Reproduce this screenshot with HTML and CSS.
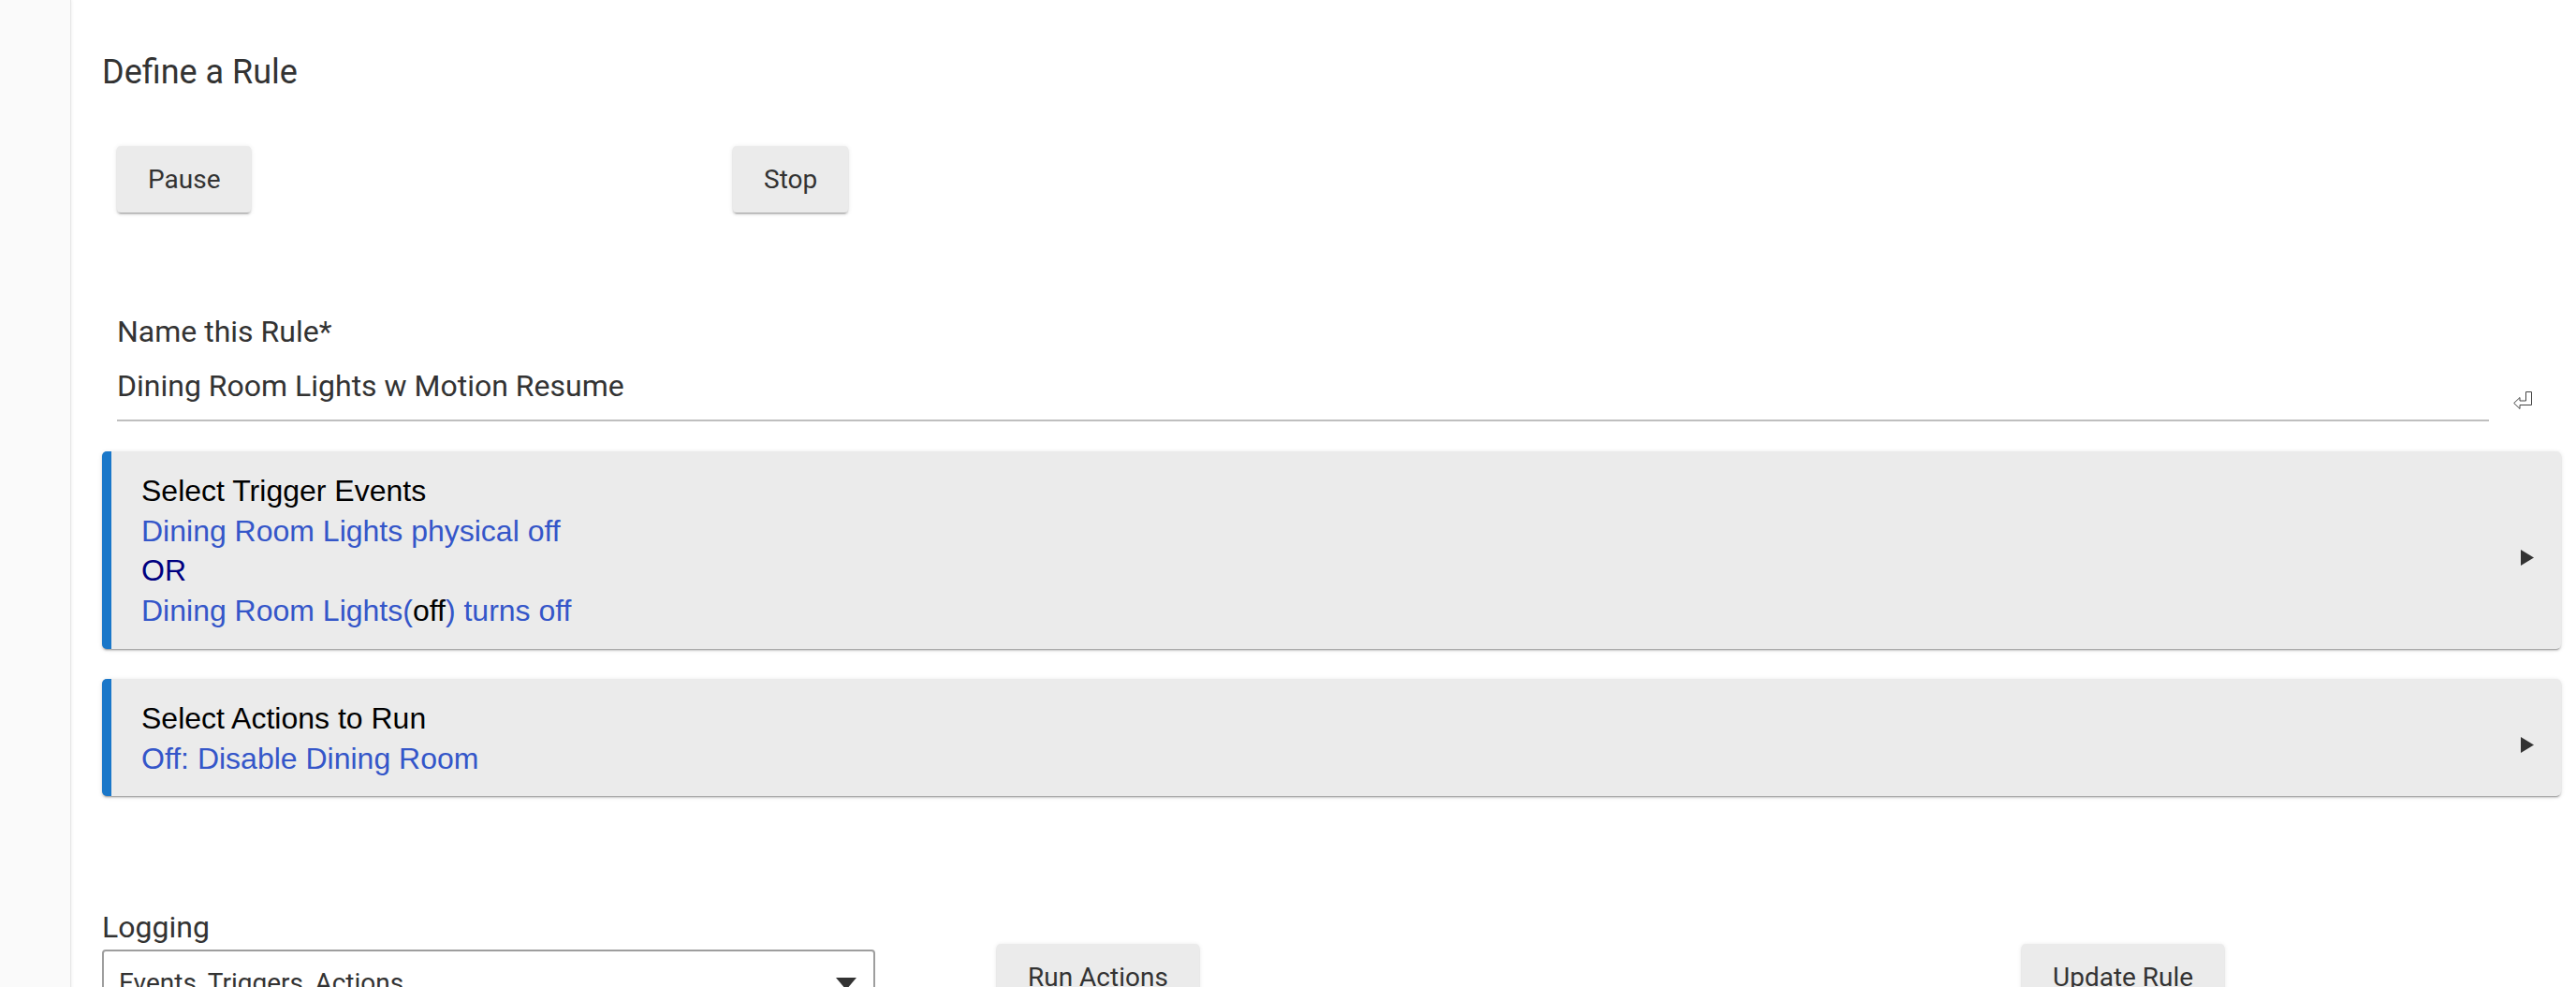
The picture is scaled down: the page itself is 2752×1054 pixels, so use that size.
FILE: index.html
```html
<!DOCTYPE html>
<html lang="en">
<head>
    <meta charset="UTF-8">
    <meta name="viewport" content="width=device-width, initial-scale=1.0">
    <title>Define a Rule</title>
    <link rel="stylesheet" href="styles.css">
</head>
<body>
    <div class="layout">
        <aside class="sidebar"></aside>

        <main class="content">
            <h2 class="page-title">Define a Rule</h2>

            <div class="control-row">
                <button class="btn">Pause</button>
                <button class="btn">Stop</button>
            </div>

            <div class="name-field">
                <label class="field-label">Name this Rule*</label>
                <div class="name-input-row">
                    <div class="name-input">Dining Room Lights w Motion Resume</div>
                    <svg class="enter-icon" width="20" height="20" viewBox="0 0 20 20">
                        <path d="M13.5 0.5 H19.5 V14.5 H7 V18.5 L0.7 12.5 L7 6.5 V10 H13.5 Z" fill="none" stroke="#444" stroke-width="1"/>
                    </svg>
                </div>
            </div>

            <div class="section-card">
                <div class="card-body">
                    <div class="card-title">Select Trigger Events</div>
                    <div class="link">Dining Room Lights physical off</div>
                    <div class="op">OR</div>
                    <div class="link">Dining Room Lights(<span class="state">off</span>) turns off</div>
                </div>
                <svg class="card-arrow" width="14" height="17" viewBox="0 0 14 17"><path d="M0 0 L14 8.5 L0 17 Z" fill="#333"/></svg>
            </div>

            <div class="section-card">
                <div class="card-body">
                    <div class="card-title">Select Actions to Run</div>
                    <div class="link">Off: Disable Dining Room</div>
                </div>
                <svg class="card-arrow" width="14" height="17" viewBox="0 0 14 17"><path d="M0 0 L14 8.5 L0 17 Z" fill="#333"/></svg>
            </div>

            <div class="bottom-row">
                <div class="logging-field">
                    <label class="field-label">Logging</label>
                    <div class="select-box">
                        <span>Events, Triggers, Actions</span>
                        <svg class="select-arrow" width="22" height="13" viewBox="0 0 22 13"><path d="M0 0 H22 L11 13 Z" fill="#333"/></svg>
                    </div>
                </div>
                <div class="bottom-btn">
                    <button class="btn">Run Actions</button>
                </div>
                <div class="bottom-btn">
                    <button class="btn">Update Rule</button>
                </div>
            </div>
        </main>
    </div>
</body>
</html>
```

FILE: styles.css
```css
* {
    margin: 0;
    padding: 0;
    box-sizing: border-box;
}

body {
    font-family: Roboto, "Liberation Sans", sans-serif;
    background: #fff;
    color: #333;
    overflow: hidden;
}

.layout {
    display: flex;
    min-height: 100vh;
}

.sidebar {
    width: 76px;
    flex-shrink: 0;
    background: #fafafa;
    border-right: 1px solid #e6e6e6;
    box-shadow: 1px 0 3px rgba(0, 0, 0, 0.05);
}

.content {
    flex: 1;
    padding: 56px 16px 0 33px;
}

.page-title {
    font-size: 36px;
    font-weight: 400;
    line-height: 42px;
    color: #333;
}

.control-row {
    display: grid;
    grid-template-columns: 658px auto;
    justify-items: start;
    padding-left: 16px;
    margin-top: 58px;
}

.btn {
    height: 71px;
    padding: 0 33px;
    font-family: Roboto, sans-serif;
    font-size: 28px;
    color: #333;
    background: #ebebeb;
    border: none;
    border-radius: 4px;
    box-shadow: 0 2px 2px rgba(0, 0, 0, 0.14), 0 3px 1px -2px rgba(0, 0, 0, 0.2), 0 1px 5px rgba(0, 0, 0, 0.12);
    cursor: pointer;
}

.name-field {
    margin-top: 109px;
    padding-left: 16px;
}

.field-label {
    display: block;
    font-size: 32px;
    line-height: 37px;
    color: #333;
}

.name-input-row {
    display: flex;
    align-items: flex-end;
    gap: 26px;
    padding-right: 31px;
    margin-top: 21px;
}

.name-input {
    flex: 1;
    font-size: 32px;
    line-height: 37px;
    padding-bottom: 17px;
    border-bottom: 2px solid #bfbfbf;
}

.enter-icon {
    margin-bottom: 12px;
}

.section-card {
    display: flex;
    align-items: center;
    margin-top: 32px;
    padding: 21px 29px 19px 32px;
    background: #ebebeb;
    border-left: 10px solid #1a77c9;
    border-radius: 5px;
    box-shadow: 0 2px 2px rgba(0, 0, 0, 0.14), 0 3px 1px -2px rgba(0, 0, 0, 0.2), 0 1px 5px rgba(0, 0, 0, 0.12);
}

.card-body {
    flex: 1;
    font-family: "Liberation Sans", Arial, sans-serif;
    font-size: 32px;
    line-height: 42.7px;
}

.card-title {
    color: #000;
}

.link {
    color: #3456c9;
}

.op {
    color: #000080;
}

.state {
    color: #000;
}

.card-arrow {
    margin-top: 14px;
}

.bottom-row {
    display: grid;
    grid-template-columns: 956px 1095px auto;
    align-items: start;
    margin-top: 122px;
}

.logging-field {
    width: 826px;
}

.select-box {
    display: flex;
    justify-content: space-between;
    align-items: flex-start;
    height: 80px;
    margin-top: 5px;
    padding: 17px 18px 0 16px;
    border: 2px solid #9e9e9e;
    border-radius: 4px;
    font-size: 28px;
    line-height: 33px;
    color: #333;
}

.select-arrow {
    margin-top: 11px;
}

.bottom-btn {
    margin-top: 36px;
}
```
